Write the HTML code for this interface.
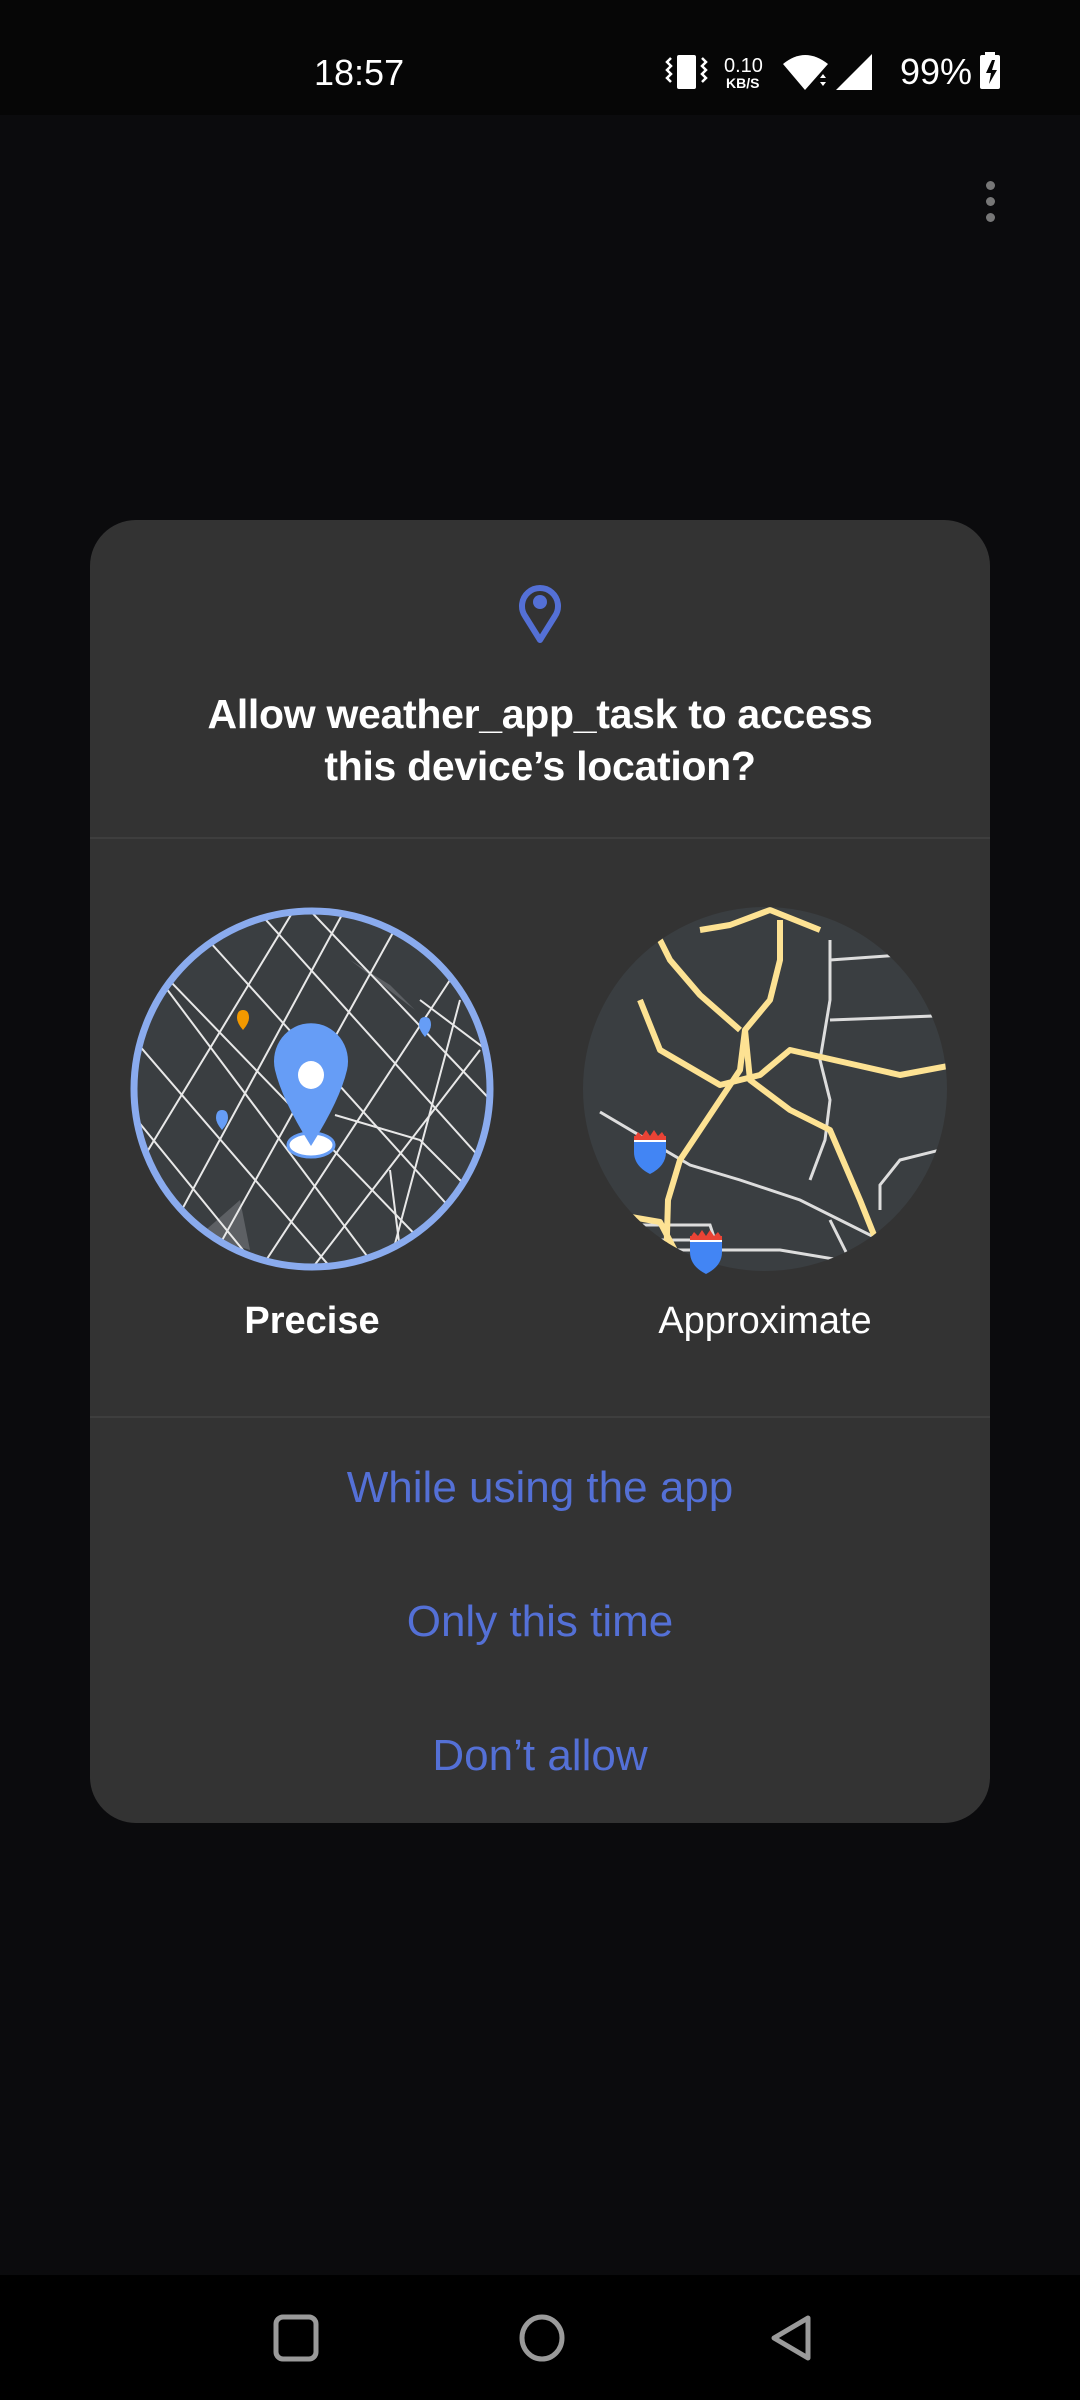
<!DOCTYPE html>
<html><head><meta charset="utf-8"><style>
*{margin:0;padding:0;box-sizing:border-box}
body{width:1080px;height:2400px;background:#0b0b0d;position:relative;overflow:hidden;font-family:"Liberation Sans",sans-serif;color:#fff}
.sb{position:absolute;left:0;top:0;width:1080px;height:115px;background:#060606}
.t{position:absolute;font-size:36px;color:#fff}
.dlg{position:absolute;left:90px;top:520px;width:900px;height:1303px;background:#333333;border-radius:46px}
.div{position:absolute;left:0;width:900px;height:2px;background:#3e3e3e}
.title{position:absolute;left:0;top:688px;width:1080px;text-align:center;font-size:41px;font-weight:bold;line-height:52px;letter-spacing:-0.3px}
.btn{position:absolute;left:0;width:1080px;text-align:center;font-size:44px;color:#5470d6}
.lbl{position:absolute;font-size:38px;text-align:center;width:360px}
.nav{position:absolute;left:0;top:2275px;width:1080px;height:125px;background:#000}
</style></head><body>
<div class="sb"></div>
<div class="t" style="left:314px;top:52px;font-size:36px">18:57</div>
<svg style="position:absolute;left:0;top:0" width="1080" height="115" viewBox="0 0 1080 115">
 <rect x="677" y="55" width="19" height="34" rx="2" fill="#fff"/>
 <path d="M671 58 l-4 4 4 4 -4 4 4 4 -4 4 4 4" stroke="#fff" stroke-width="2.5" fill="none"/>
 <path d="M702 58 l4 4 -4 4 4 4 -4 4 4 4 -4 4" stroke="#fff" stroke-width="2.5" fill="none"/>
 <text x="724" y="72" font-size="20" fill="#fff" font-family="Liberation Sans">0.10</text>
 <text x="726" y="88" font-size="14" fill="#fff" font-family="Liberation Sans" font-weight="bold">KB/S</text>
 <path d="M783 64 Q805 46 828 64 L805 90 Z" fill="#fff"/>
 <path d="M820 78 l3 -4 3 4z M820 82 l3 4 3 -4z" fill="#fff"/>
 <path d="M838 88 L872 54 L872 90 L836 90Z" fill="#fff"/>
 <text x="900" y="84" font-size="36" fill="#fff" font-family="Liberation Sans">99%</text>
 <rect x="980" y="55" width="20" height="34" rx="2" fill="#fff"/><rect x="985" y="52" width="10" height="4" fill="#fff"/>
 <path d="M992 60 l-6 13 h5 l-2 11 8 -14 h-5 l3 -10z" fill="#060606"/>
</svg>
<div style="position:absolute;left:986px;top:181px;width:9px;height:9px;border-radius:50%;background:#777"></div>
<div style="position:absolute;left:986px;top:197px;width:9px;height:9px;border-radius:50%;background:#777"></div>
<div style="position:absolute;left:986px;top:213px;width:9px;height:9px;border-radius:50%;background:#777"></div>

<div class="dlg">
 <div class="div" style="top:317px"></div>
 <div class="div" style="top:896px"></div>
</div>
<svg style="position:absolute;left:516px;top:580px" width="48" height="64" viewBox="0 0 48 64">
 <path d="M24 60 L9 36 A18 18 0 1 1 39 36 Z" fill="none" stroke="#5470d6" stroke-width="6" stroke-linejoin="round"/>
 <circle cx="24" cy="22" r="7" fill="#5470d6"/>
</svg>
<div class="title">Allow weather_app_task to access<br>this device’s location?</div>

<svg style="position:absolute;left:0;top:0" width="1080" height="1400" viewBox="0 0 1080 1400">
 <defs>
  <clipPath id="c1"><circle cx="312" cy="1089" r="178"/></clipPath>
  <clipPath id="c2"><circle cx="765" cy="1089" r="182"/></clipPath>
 </defs>
 <circle cx="312" cy="1089" r="178" fill="#3a3e41"/>
 <g clip-path="url(#c1)" stroke="#e8e8e8" stroke-width="2" fill="none">
  <path d="M350 960 L390 985 L415 1010 Z" fill="#5d6064" stroke="none"/>
  <path d="M200 1235 L240 1200 L250 1250 Z" fill="#5d6064" stroke="none"/>
  <path d="M100 900 L400 1300 M140 950 L430 1250 M190 920 L470 1230 M230 880 L500 1180 M300 900 L500 1110 M100 1000 L350 1290 M80 1050 L300 1320 M60 1140 L250 1300 M420 1000 L500 1060"/>
  <path d="M300 900 L130 1180 M350 900 L160 1250 M400 920 L200 1280 M450 980 L240 1300 M480 1050 L280 1310 M460 1000 L380 1300 M150 950 L60 1150"/>
  <path d="M335 1115 L420 1140 L470 1190 M390 1170 L400 1250"/>
 </g>
 <circle cx="312" cy="1089" r="178" fill="none" stroke="#8aabee" stroke-width="7"/>
 <path d="M243 1018 q0 -8 -6 -8 q-6 0 -6 8 q0 5 6 12 q6 -7 6 -12z" fill="#f29900" transform="translate(6,0)"/>
 <path d="M431 1025 q0 -8 -6 -8 q-6 0 -6 8 q0 5 6 12 q6 -7 6 -12z" fill="#669df6"/>
 <path d="M228 1118 q0 -8 -6 -8 q-6 0 -6 8 q0 5 6 12 q6 -7 6 -12z" fill="#669df6"/>
 <ellipse cx="311" cy="1145" rx="23" ry="12" fill="#fff" stroke="#669df6" stroke-width="3"/>
 <path d="M275 1070 A37 38 0 1 1 347 1070 Q340 1100 311 1146 Q282 1100 275 1070Z" fill="#669df6"/>
 <ellipse cx="311" cy="1075" rx="13" ry="14" fill="#fff"/>

 <circle cx="765" cy="1089" r="182" fill="#3a3e41"/>
 <g clip-path="url(#c2)" fill="none">
  <g stroke="#dddddd" stroke-width="3">
   <path d="M600 1112 L690 1165 L740 1180 L800 1200 L850 1225 L900 1250 L900 1280 L950 1280"/>
   <path d="M590 1240 L715 1240 L710 1225 L590 1225 M600 1240 L630 1250 L780 1250 L840 1260 L880 1290 L950 1300"/>
   <path d="M590 1290 L700 1290 L780 1280 L860 1295 L870 1310 L880 1380 L780 1380"/>
   <path d="M600 1375 L1000 1375 L1010 1380 L1040 1380"/>
   <path d="M830 940 L830 1000 L820 1060 L830 1100 L825 1140 L810 1180"/>
   <path d="M830 960 L900 955 M830 1020 L960 1015 M960 1145 L900 1160 L880 1185 L880 1210"/>
   <path d="M880 1240 L920 1280 L990 1280 M830 1220 L850 1260 L890 1300"/>
   <path d="M790 1310 L780 1460 M950 1380 L940 1420 L940 1470 M850 1460 L950 1460 M790 1440 L900 1440"/>
  </g>
  <g stroke="#fde293" stroke-width="6" stroke-linejoin="round">
   <path d="M660 1500 L660 1380 L665 1300 L668 1200 L680 1160 L720 1100 L740 1070 L745 1030 L770 1000 L780 960 L780 920"/>
   <path d="M650 920 L670 960 L700 995 L740 1030"/>
   <path d="M640 1000 L660 1050 L720 1085 L760 1075 L790 1050 L900 1075 L980 1060"/>
   <path d="M700 930 L730 925 L770 910 L820 930"/>
   <path d="M745 1030 L750 1080 L790 1110 L830 1130 L860 1200 L880 1250 L900 1290 L960 1370 L1000 1410"/>
   <path d="M620 1215 L660 1222 L680 1260 L700 1275 L760 1290 L830 1320"/>
  </g>
 </g>
 <g>
  <path d="M634 1138 h32 v14 q0 14 -16 22 q-16 -8 -16 -22z" fill="#4285f4"/>
  <path d="M634 1138 l4 -6 4 4 4 -6 4 6 4 -6 4 6 4 -4 4 6z" fill="#ea4335"/><rect x="634" y="1136" width="32" height="4" fill="#ea4335"/>
  <rect x="634" y="1140" width="32" height="2" fill="#fff"/>
  <path d="M690 1238 h32 v14 q0 14 -16 22 q-16 -8 -16 -22z" fill="#4285f4"/>
  <path d="M690 1238 l4 -6 4 4 4 -6 4 6 4 -6 4 6 4 -4 4 6z" fill="#ea4335"/><rect x="690" y="1236" width="32" height="4" fill="#ea4335"/>
  <rect x="690" y="1240" width="32" height="2" fill="#fff"/>
 </g>
</svg>

<div class="lbl" style="left:132px;top:1300px;font-weight:bold">Precise</div>
<div class="lbl" style="left:585px;top:1300px">Approximate</div>

<div class="btn" style="top:1463px">While using the app</div>
<div class="btn" style="top:1597px">Only this time</div>
<div class="btn" style="top:1731px">Don’t allow</div>

<div class="nav"></div>
<svg style="position:absolute;left:0;top:2300px" width="1080" height="80" viewBox="0 0 1080 80">
 <rect x="276" y="17" width="40" height="42" rx="7" fill="none" stroke="#9a9a9a" stroke-width="5"/>
 <ellipse cx="542" cy="38" rx="20" ry="21" fill="none" stroke="#9a9a9a" stroke-width="5"/>
 <path d="M808 18 L808 58 L774 38 Z" fill="none" stroke="#9a9a9a" stroke-width="5" stroke-linejoin="round"/>
</svg>
</body></html>
